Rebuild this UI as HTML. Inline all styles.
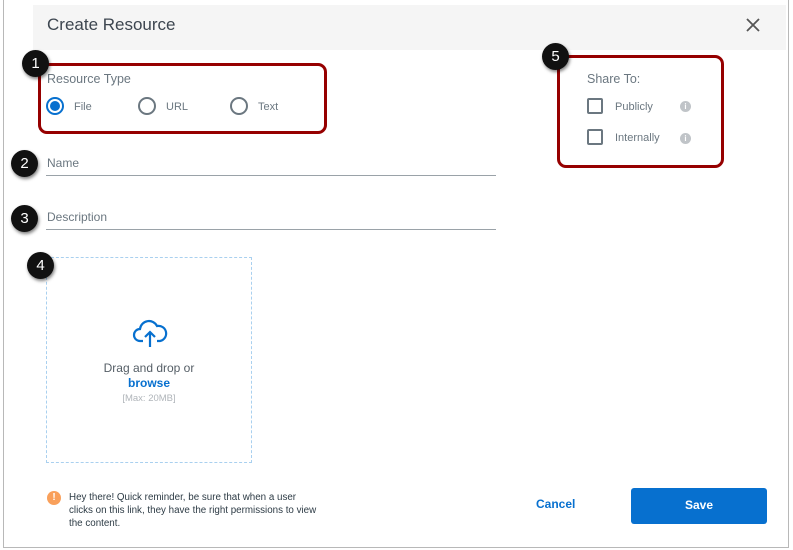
<!DOCTYPE html>
<html><head><style>
*{margin:0;padding:0;box-sizing:border-box}
body{width:793px;height:550px;background:#fff;font-family:"Liberation Sans",sans-serif;position:relative;overflow:hidden;color:#2d3b45}
.a{position:absolute}
.frame{left:3px;top:-2px;width:786px;height:550px;border:1px solid #b8b8b8;border-top:none}
.hdr{left:33px;top:5px;width:753px;height:45px;background:#f5f5f5}
.badge{width:27px;height:27px;border-radius:50%;background:#111;color:#fff;font-size:15px;text-align:center;line-height:27px;box-shadow:1px 2px 3px rgba(0,0,0,.5)}
.red{border:3px solid #960000;border-radius:9px}
.lbl{color:#6b7780;font-size:12px}
.radio{width:18px;height:18px;border:2px solid #6b7780;border-radius:50%}
.cb{width:16px;height:16px;border:2px solid #6b7780;border-radius:2px}
.info{width:11px;height:11px;border-radius:50%;background:#c0c4c8;color:#fff;font-size:8px;font-weight:bold;text-align:center;line-height:11px}
.line{height:1px;background:#9aa2a8}
</style></head><body>
<div class="a frame"></div>
<div class="a hdr"></div>
<div class="a" style="left:47px;top:15px;font-size:17px;color:#3d4650">Create Resource</div>
<svg class="a" style="left:746px;top:18px" width="14" height="14"><path d="M1 1L13 13M13 1L1 13" stroke="#555" stroke-width="1.8"/></svg>

<div class="a red" style="left:38px;top:63px;width:289px;height:71px"></div>
<div class="a lbl" style="left:47px;top:72px;font-size:12.5px">Resource Type</div>
<div class="a radio" style="left:46px;top:97px;border-color:#0770cf"></div>
<div class="a" style="left:50px;top:101px;width:10px;height:10px;border-radius:50%;background:#0770cf"></div>
<div class="a lbl" style="left:74px;top:101px;font-size:11px">File</div>
<div class="a radio" style="left:138px;top:97px"></div>
<div class="a lbl" style="left:166px;top:101px;font-size:11px">URL</div>
<div class="a radio" style="left:230px;top:97px"></div>
<div class="a lbl" style="left:258px;top:101px;font-size:11px">Text</div>

<div class="a lbl" style="left:47px;top:156px">Name</div>
<div class="a line" style="left:46px;top:175px;width:450px"></div>
<div class="a lbl" style="left:47px;top:210px">Description</div>
<div class="a line" style="left:46px;top:229px;width:450px"></div>

<div class="a" style="left:46px;top:257px;width:206px;height:206px;border:1px dashed #a9d0ef"></div>
<svg class="a" style="left:132px;top:319px" width="36" height="30" viewBox="0 0 36 30"><path d="M11 22H8a6 6 0 0 1 0-12a9 9 0 0 1 17-3a7 7 0 0 1 3 15h-3" fill="none" stroke="#0770cf" stroke-width="2.2"/><path d="M18 28V13M13 18l5-5 5 5" fill="none" stroke="#0770cf" stroke-width="2.2"/></svg>
<div class="a" style="left:46px;top:361px;width:206px;text-align:center;font-size:12px;color:#555e66">Drag and drop or</div>
<div class="a" style="left:46px;top:376px;width:206px;text-align:center;font-size:12px;color:#0770cf;font-weight:bold">browse</div>
<div class="a" style="left:46px;top:393px;width:206px;text-align:center;font-size:9.5px;color:#b0b5ba">[Max: 20MB]</div>

<div class="a" style="left:47px;top:491px;width:14px;height:14px;border-radius:50%;background:#f9a05b;color:#fff;font-size:10px;font-weight:bold;text-align:center;line-height:14px">!</div>
<div class="a" style="left:69px;top:491px;width:250px;font-size:9.8px;line-height:13px;color:#2d3b45">Hey there! Quick reminder, be sure that when a user clicks on this link, they have the right permissions to view the content.</div>

<div class="a" style="left:536px;top:497px;font-size:12px;color:#0770cf;font-weight:bold">Cancel</div>
<div class="a" style="left:631px;top:488px;width:136px;height:36px;background:#0770cf;border-radius:3px;color:#fff;font-weight:bold;font-size:12px;text-align:center;line-height:34px">Save</div>

<div class="a red" style="left:557px;top:55px;width:167px;height:113px"></div>
<div class="a lbl" style="left:587px;top:72px;font-size:12.5px">Share To:</div>
<div class="a cb" style="left:587px;top:98px"></div>
<div class="a lbl" style="left:615px;top:101px;font-size:11px">Publicly</div>
<div class="a info" style="left:680px;top:101px">i</div>
<div class="a cb" style="left:587px;top:129px"></div>
<div class="a lbl" style="left:615px;top:132px;font-size:11px">Internally</div>
<div class="a info" style="left:680px;top:133px">i</div>

<div class="a badge" style="left:22px;top:50px">1</div>
<div class="a badge" style="left:11px;top:150px">2</div>
<div class="a badge" style="left:11px;top:205px">3</div>
<div class="a badge" style="left:27px;top:252px">4</div>
<div class="a badge" style="left:542px;top:43px">5</div>
</body></html>
